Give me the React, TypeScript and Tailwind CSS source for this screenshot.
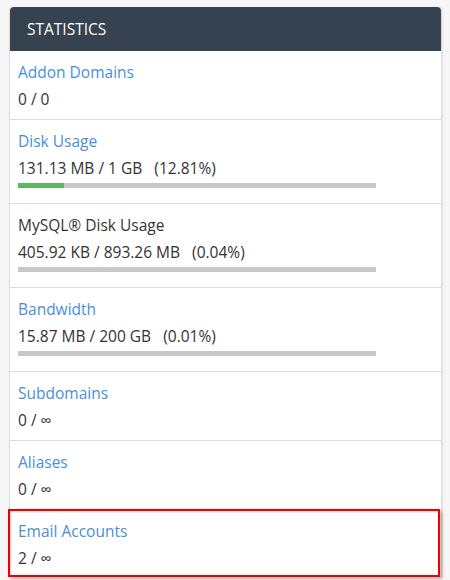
import type { ReactNode } from 'react'

interface StatRowProps {
  title: string
  value: ReactNode
  link?: boolean
  percent?: number
  last?: boolean
}

const StatRow = ({ title, value, link = true, percent, last = false }: StatRowProps) => {
  // tiny percentages don't show a sliver in the original
  const fill = percent !== undefined && percent >= 1 ? percent : 0
  return (
    <div className={`px-[8px] pt-[10px] ${percent !== undefined ? 'pb-[15px]' : 'pb-[10px]'} ${last ? '' : 'border-b border-[#dddddd]'}`}>
      <div className={`text-[15.5px] leading-[22px] ${link ? 'text-[#4a8fd6]' : 'text-[#333333]'}`}>{title}</div>
      <div className="mt-[6px] text-[15.5px] leading-[20px] text-[#333333]">{value}</div>
      {percent !== undefined && (
        <div className="mt-[5px] h-[5px] w-[358px] bg-[#c8c8c8]">
          <div className="h-full bg-[#5cb85c]" style={{ width: `${fill}%` }} />
        </div>
      )}
    </div>
  )
}

const App = () => {
  return (
    <div className="h-[580px] w-[450px] overflow-hidden bg-[#f6f6f6] pl-[9px] pt-[7px]" style={{ fontFamily: '"Open Sans", "Noto Sans", sans-serif' }}>
      <div className="w-[433px] rounded-t-[4px] border-x border-[#dddddd] bg-white shadow-[1px_0_2px_rgba(0,0,0,0.08)]">
        <div className="flex h-[44px] items-center rounded-t-[4px] bg-[#36424f] pl-[17px] pt-[1px] text-[15.5px] text-white">STATISTICS</div>
        <StatRow title="Addon Domains" value="0 / 0" />
        <StatRow title="Disk Usage" value={<>131.13 MB / 1 GB &nbsp;&nbsp;(12.81%)</>} percent={12.81} />
        <StatRow title="MySQL® Disk Usage" link={false} value={<>405.92 KB / 893.26 MB &nbsp;&nbsp;(0.04%)</>} percent={0.04} />
        <StatRow title="Bandwidth" value={<>15.87 MB / 200 GB &nbsp;&nbsp;(0.01%)</>} percent={0.01} />
        <StatRow title="Subdomains" value="0 / ∞" />
        <StatRow title="Aliases" value="0 / ∞" />
        <div className="relative">
          <StatRow title="Email Accounts" value="2 / ∞" last />
          <div className="pointer-events-none absolute -left-[2px] -top-[1px] h-[68px] w-[432px] border-2 border-[#ee0000] shadow-[2px_2px_3px_rgba(0,0,0,0.3),inset_1px_1px_2px_rgba(0,0,0,0.2)]" />
        </div>
      </div>
    </div>
  )
}

export default App
